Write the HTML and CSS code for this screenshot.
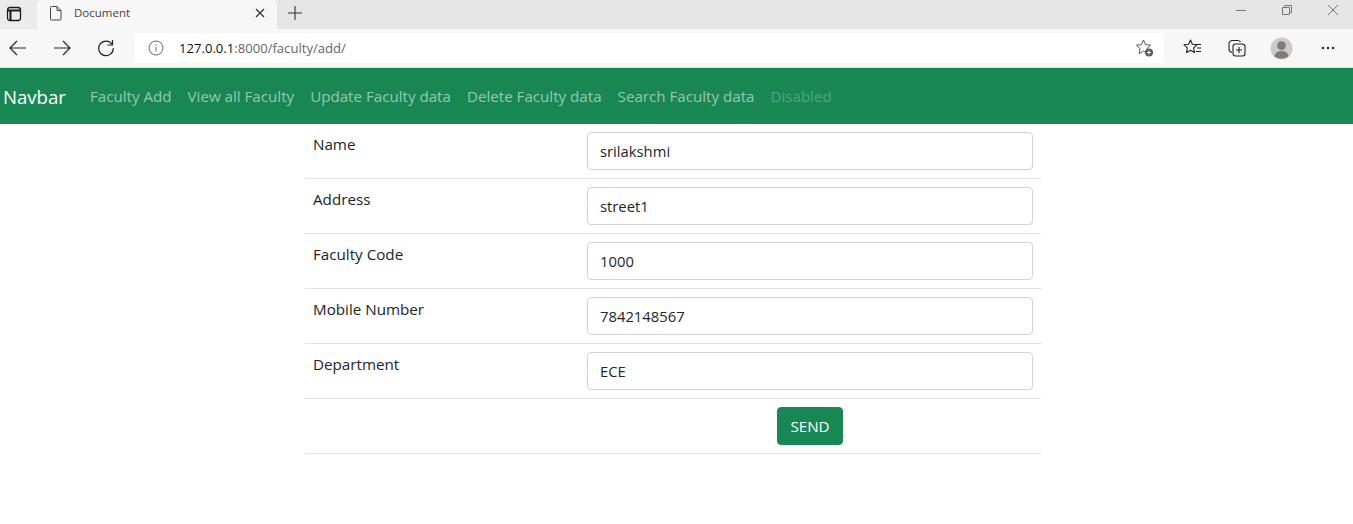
FILE: index.html
```html
<!DOCTYPE html>
<html lang="en">
<head>
<meta charset="utf-8">
<title>Document</title>
<link rel="stylesheet" href="styles.css">
</head>
<body>
<header class="browser">
  <div class="tabstrip">
    <div class="tab-toggle">
      <svg width="16" height="16" viewBox="0 0 16 16" fill="none" stroke="#1a1a1a"><rect x="1.500" y="1.500" width="13" height="13" rx="2.500" stroke-width="1.300"/><path d="M1.500 4.500h13" stroke-width="2"/><path d="M4.500 4.500V14.500" stroke-width="2"/></svg>
    </div>
    <div class="tab">
      <svg class="tab-icon" width="14" height="16" viewBox="0 0 14 16" fill="none" stroke="#444" stroke-width="1"><path d="M1.500 2.500a1 1 0 0 1 1-1h5.500l4 4v8.500a1 1 0 0 1-1 1h-8.500a1 1 0 0 1-1-1z" stroke-linejoin="round"/><path d="M8 1.500v4h4"/></svg>
      <span class="tab-title">Document</span>
      <svg class="tab-close" width="10" height="10" viewBox="0 0 10 10" stroke="#333" stroke-width="1.300"><path d="M1 1l8 8M9 1l-8 8"/></svg>
    </div>
    <svg class="new-tab" width="14" height="14" viewBox="0 0 14 14" stroke="#333" stroke-width="1.100"><path d="M7 0v14M0 7h14"/></svg>
    <div class="window-controls">
      <svg width="10" height="10" viewBox="0 0 10 10" stroke="#777"><path d="M0 5.500h10"/></svg>
      <svg width="10" height="10" viewBox="0 0 10 10" fill="none" stroke="#777"><path d="M.5 2.500h7v7h-7zM2.500 2.500v-2h7v7h-2"/></svg>
      <svg width="10" height="10" viewBox="0 0 10 10" stroke="#777"><path d="M0 0l10 10M10 0L0 10"/></svg>
    </div>
  </div>
  <div class="toolbar">
    <svg class="nav-icon" width="18" height="16" viewBox="0 0 18 16" fill="none" stroke="#222" stroke-width="1.200"><path d="M17 8H1M8 1L1 8l7 7"/></svg>
    <svg class="nav-icon" width="18" height="16" viewBox="0 0 18 16" fill="none" stroke="#222" stroke-width="1.200"><path d="M1 8h16M10 1l7 7-7 7"/></svg>
    <svg class="nav-icon" width="18" height="18" viewBox="0 0 18 18" fill="none" stroke="#222" stroke-width="1.200"><path d="M15.200 5.500A7.300 7.300 0 1 0 16.300 9"/><path d="M15.500 1v5h-5"/></svg>
    <div class="address">
      <svg class="info" width="16" height="16" viewBox="0 0 16 16" fill="none" stroke="#666"><circle cx="8" cy="8" r="7"/><path d="M8 7v4.500M8 4.200v1.300"/></svg>
      <span class="url"><span class="host">127.0.0.1</span>:8000/faculty/add/</span>
      <svg class="fav-add" width="20" height="20" viewBox="0 0 20 20"><path d="M8.500 2l2.100 4.600 5 .6-3.700 3.400 1 5L8.500 13.100 4.100 15.600l1-5L1.400 7.200l5-.6z" fill="none" stroke="#555" stroke-linejoin="round"/><circle cx="14" cy="14.500" r="4" fill="#5a5a5a"/><path d="M14 12.500v4M12 14.500h4" stroke="#fff"/></svg>
    </div>
    <div class="tools">
      <svg width="20" height="20" viewBox="0 0 20 20" fill="none" stroke="#222" stroke-width="1.100"><path d="M7.500 2l1.900 4.300 4.600.5-3.400 3.100.9 4.600-4-2.300-4 2.300.9-4.600L1 6.800l4.600-.5z" stroke-linejoin="round"/><path d="M12 6.500h6M14 10h4M13 13.500h5"/></svg>
      <svg width="20" height="20" viewBox="0 0 20 20" fill="none" stroke="#222" stroke-width="1.100"><path d="M5 14.500C3 14 2 12.500 2 11V6c0-2 1.500-3.500 3.500-3.500h5c1.500 0 2.500.7 3 1.500"/><rect x="6" y="6" width="12" height="12" rx="2.500"/><path d="M12 9v6M9 12h6"/></svg>
      <svg class="avatar" width="23" height="23" viewBox="0 0 24 24"><circle cx="12" cy="12" r="11.500" fill="#cdcbc8"/><circle cx="12" cy="9" r="4.500" fill="#7f7b78"/><path d="M4.500 20c1-4 4-5.500 7.500-5.500s6.500 1.500 7.500 5.500a11.500 11.500 0 0 1-15 0z" fill="#7f7b78"/></svg>
      <svg class="more" width="14" height="4" viewBox="0 0 14 4" fill="#222"><circle cx="2" cy="2" r="1.200"/><circle cx="7" cy="2" r="1.200"/><circle cx="12" cy="2" r="1.200"/></svg>
    </div>
  </div>
</header>
<nav class="navbar">
  <a class="brand" href="#">Navbar</a>
  <a class="nav-link" href="#">Faculty Add</a>
  <a class="nav-link" href="#">View all Faculty</a>
  <a class="nav-link" href="#">Update Faculty data</a>
  <a class="nav-link" href="#">Delete Faculty data</a>
  <a class="nav-link" href="#">Search Faculty data</a>
  <a class="nav-link disabled" href="#">Disabled</a>
</nav>
<main class="container">
  <form class="form">
    <div class="row"><label class="label">Name</label><div class="field"><input class="input" value="srilakshmi"></div></div>
    <div class="row"><label class="label">Address</label><div class="field"><input class="input" value="street1"></div></div>
    <div class="row"><label class="label">Faculty Code</label><div class="field"><input class="input" value="1000"></div></div>
    <div class="row"><label class="label">Mobile Number</label><div class="field"><input class="input" value="7842148567"></div></div>
    <div class="row"><label class="label">Department</label><div class="field"><input class="input" value="ECE"></div></div>
    <div class="row"><div class="label"></div><div class="field submit"><button class="send" type="button">SEND</button></div></div>
  </form>
</main>
</body>
</html>
```
FILE: styles.css
```css
* { box-sizing: border-box; }
html, body { margin: 0; padding: 0; }
body {
  background: #fff;
  color: #212529;
  font-family: "Open Sans", "Noto Sans", sans-serif;
  font-size: 15.2px;
  overflow: hidden;
}
.browser { height: 68px; display: flex; flex-direction: column; }
.tabstrip {
  height: 29px;
  background: #e5e5e5;
  display: flex;
  align-items: center;
}
.tab-toggle {
  width: 37px;
  height: 28px;
  margin-bottom: 1px;
  display: flex;
  align-items: center;
  padding-left: 6px;
  background: #ebebeb;
  border-radius: 0 0 4px 0;
}
.tab {
  width: 240px;
  height: 29px;
  background: #f7f7f7;
  border-radius: 4px 4px 0 0;
  display: flex;
  align-items: center;
  padding: 0 12px 3px 12px;
}
.tab-title { margin: 0 0 2px 11px; font-size: 11.5px; color: #444; flex: 1; }
.new-tab { margin: 0 0 3px 11px; }
.window-controls { margin-left: auto; display: flex; gap: 36px; padding: 0 15px 10px 0; }
.toolbar {
  height: 39px;
  background: #f7f7f7;
  border-bottom: 1px solid #ddd;
  display: flex;
  align-items: center;
  padding: 0 0 0 9px;
}
.nav-icon { margin-right: 26px; flex: none; }
.nav-icon:nth-child(3) { margin-right: 19px; }
.address {
  width: 1030px;
  height: 30px;
  background: #fff;
  border-radius: 4px;
  display: flex;
  align-items: center;
  padding: 0 9px 0 14px;
}
.info { flex: none; }
.url { margin-left: 15px; font-size: 13.1px; color: #666; flex: 1; }
.host { color: #111; }
.tools { display: flex; align-items: center; gap: 24px; margin-left: 19px; }
.avatar { margin-left: -1px; }
.more { margin-left: 4px; }
.navbar {
  height: 56px;
  background: #198754;
  display: flex;
  align-items: center;
  padding: 0 3px;
}
.brand { color: #fff; font-size: 18.6px; text-decoration: none; margin-right: 16px; }
.nav-link { color: rgba(255,255,255,.55); text-decoration: none; padding: 0 8px; font-size: 15.15px; }
.nav-link.disabled { color: rgba(255,255,255,.25); }
.container { width: 736px; margin-left: 305px; }
.row { display: flex; height: 55px; border-bottom: 1px solid #dee2e6; padding: 8px; }
.label { width: 266px; flex: none; margin-right: 8px; line-height: 24px; }
.field { flex: 1; }
.submit { display: flex; justify-content: center; }
.input {
  display: block;
  width: 100%;
  height: 38px;
  padding: 6px 12px;
  border: 1px solid #ced4da;
  border-radius: 4px;
  font: inherit;
  font-size: 14.8px;
  color: #212529;
  background: #fff;
}
.send {
  width: 66px;
  height: 38px;
  background: #198754;
  color: #fff;
  border: 1px solid #198754;
  border-radius: 4px;
  font: inherit;
  padding: 0;
}
```
